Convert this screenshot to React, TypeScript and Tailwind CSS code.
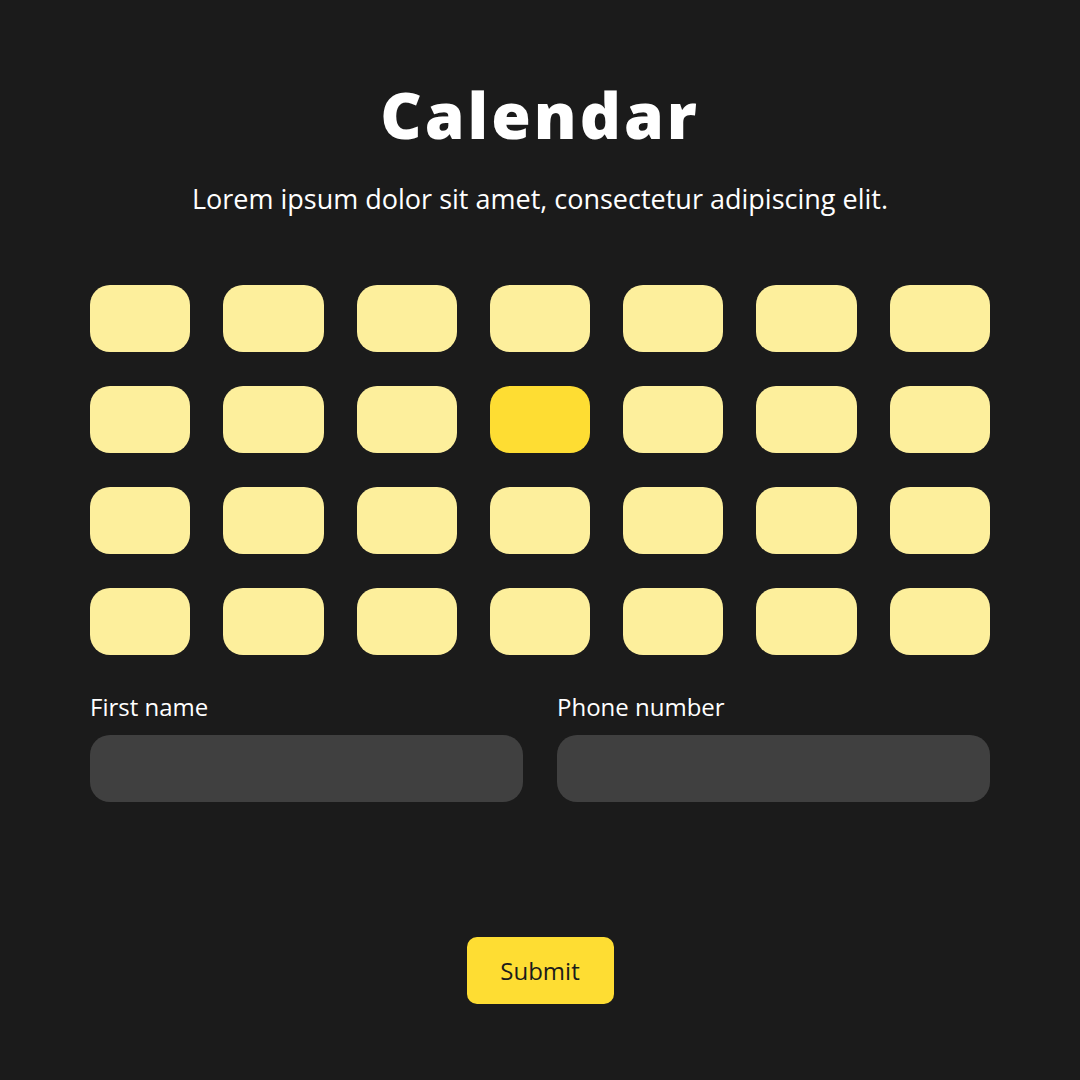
import React from "react";

const font = { fontFamily: '"Open Sans", "Liberation Sans", sans-serif' };

const days = Array.from({ length: 28 }, (_, i) => i);

export default function App() {
  return (
    <div
      className="w-[1080px] h-[1080px] bg-[#1b1b1b] text-white flex flex-col px-[90px] pt-[80px]"
      style={font}
    >
      <h1 className="text-center text-[64px] leading-[70px] font-extrabold tracking-[3px]">
        Calendar
      </h1>
      <p className="mt-[33px] text-center text-[27px] leading-[32px]">
        Lorem ipsum dolor sit amet, consectetur adipiscing elit.
      </p>

      <div className="mt-[70px] grid grid-cols-7 gap-x-[33px] gap-y-[34px]">
        {days.map((d) => (
          <button
            key={d}
            className={
              d === 10
                ? "h-[67px] rounded-[20px] bg-[#fedd33]"
                : "h-[67px] rounded-[20px] bg-[#fdef9c]"
            }
          />
        ))}
      </div>

      <div className="mt-[38px] grid grid-cols-2 gap-x-[34px]">
        <label className="flex flex-col">
          <span className="text-[24px] leading-[28px] mb-[14px]">First name</span>
          <input className="h-[67px] rounded-[20px] bg-[#404040] outline-none px-5" />
        </label>
        <label className="flex flex-col">
          <span className="text-[24px] leading-[28px] mb-[14px]">Phone number</span>
          <input className="h-[67px] rounded-[20px] bg-[#404040] outline-none px-5" />
        </label>
      </div>

      <div className="mt-[135px] flex justify-center">
        <button className="w-[147px] h-[67px] rounded-[10px] bg-[#fedd33] text-[#1b1b1b] text-[24px]">
          Submit
        </button>
      </div>
    </div>
  );
}
